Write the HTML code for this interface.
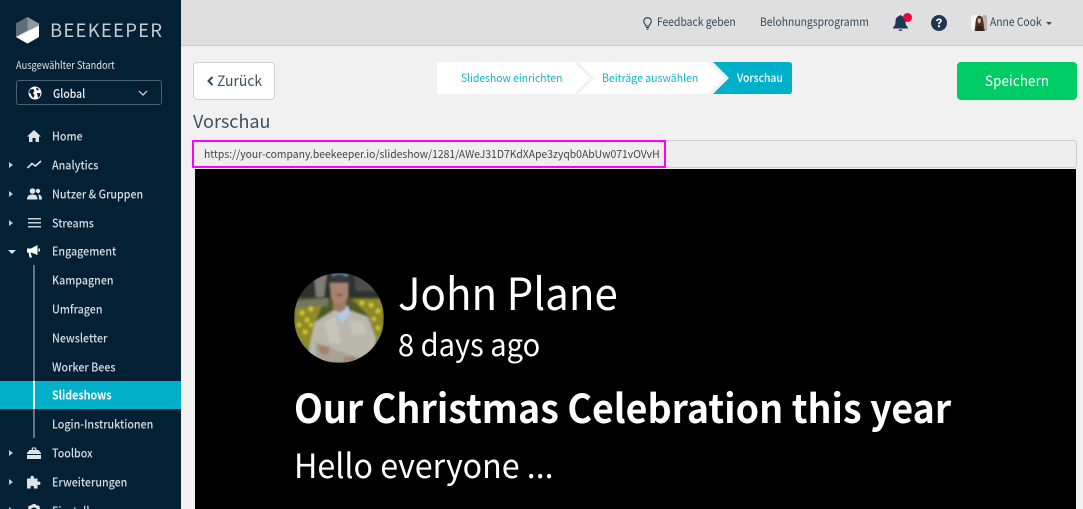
<!DOCTYPE html>
<html><head><meta charset="utf-8"><style>
html,body{margin:0;padding:0;width:1083px;height:509px;overflow:hidden;background:#f1f1f1}
body{position:relative;font-family:"Noto Sans CJK JP","Liberation Sans",sans-serif;}
.t{position:absolute;white-space:nowrap;line-height:20px;height:20px;transform-origin:0 50%}
.b{position:absolute}
.n{font-size:12px;color:#d8dde1;left:51.500px;font-weight:500;transform:translateY(.5px) scaleX(.89)}
svg{position:absolute;overflow:visible}
.a{position:absolute;left:9px;width:0;height:0;border-left:4px solid #c3cbd2;border-top:3.500px solid transparent;border-bottom:3.500px solid transparent}
</style></head><body>
<div class="b" style="left:0;top:0;width:181px;height:509px;background:#042035"></div>
<div class="b" style="left:181px;top:0;width:902px;height:45px;background:#dfdfdf;border-bottom:1px solid #c9c9c9"></div>

<svg style="left:16px;top:17px" width="24" height="27" viewBox="0 0 24 27"><polygon points="11.500,0 23,6.500 23,20 11.500,26.500 0,20 0,6.500" fill="#8d979f"/><polygon points="0,6.500 11.500,0 11.500,13 0,20" fill="#5f6d78"/><polygon points="0,20 23,8.500 23,20 11.500,26.500" fill="#fff"/></svg>
<div class="t" style="left:50px;top:20px;font-size:18.500px;letter-spacing:1.250px;color:#c6ccd1">BEEKEEPER</div>
<div class="t" style="left:16px;top:56px;font-size:10.500px;color:#dfe3e6;transform:scaleX(.884)">Ausgewählter Standort</div>
<div class="b" style="left:16px;top:80px;width:144px;height:23px;border:1px solid #4c6173;border-radius:3px"></div>
<svg style="left:28px;top:86px" width="14" height="14" viewBox="0 0 14 14"><circle cx="7" cy="7" r="6.500" fill="#fff"/><path d="M2 3.500L5.500 3 6.500 5 5 7 6.500 9 5.500 12 3.500 10 3 8 1 6.500ZM8 1.500L11 3 10 4.500 8.500 4ZM9 7H12.500L12 10 10 12 9.500 9.500Z" fill="#042035"/></svg>
<div class="t" style="left:53px;top:84px;font-size:12px;font-weight:500;color:#f0f2f4;transform:scaleX(.865)">Global</div>
<svg style="left:138px;top:90px" width="10" height="6" viewBox="0 0 10 6"><path d="M1 1L5 5 9 1" fill="none" stroke="#dfe3e6" stroke-width="1.200"/></svg>

<svg style="left:27px;top:130px" width="14" height="12" viewBox="0 0 14 12"><path d="M7 0L14 6.500H12V12H8.500V8H5.500V12H2V6.500H0Z" fill="#dfe3e6"/></svg>
<svg style="left:27px;top:160px" width="15" height="9" viewBox="0 0 15 9"><path d="M.5 8L5 3.500 8.500 6 14 1" fill="none" stroke="#dfe3e6" stroke-width="1.600"/></svg>
<svg style="left:27px;top:188px" width="15" height="12" viewBox="0 0 15 12"><circle cx="5.500" cy="3" r="2.800" fill="#dfe3e6"/><path d="M0 11.500C0 7.500 2.500 6.500 5.500 6.500S10.500 7.500 10.500 11.500Z" fill="#dfe3e6"/><circle cx="11" cy="3" r="2.200" fill="#dfe3e6"/><path d="M11 6.500C13.500 6.500 15 8 15 11.500H12C12 9.500 12 8 11 6.500Z" fill="#dfe3e6"/></svg>
<svg style="left:28px;top:218px" width="13" height="10" viewBox="0 0 13 10"><path d="M0 0H13V1.500H0ZM0 4H13V5.500H0ZM0 8H13V9.500H0Z" fill="#c9cfd4"/></svg>
<svg style="left:27px;top:245px" width="14" height="13" viewBox="0 0 14 13"><path d="M0 3.500H4L10.500 0V10L4 7.500H3.500L5 12.500H2.500L1.500 7.500H0Z" fill="#fff"/><path d="M11.500 3C13.500 3.500 13.500 6.500 11.500 7Z" fill="#fff"/></svg>
<svg style="left:27px;top:447px" width="14" height="12" viewBox="0 0 14 12"><path d="M0 6L2.500 3H4.500L5 .5H9L9.500 3H11.500L14 6V7H0ZM5.800 3H8.200L8 1.500H6ZM0 8H14V12H0Z" fill="#dfe3e6"/></svg>
<svg style="left:27px;top:475px" width="14" height="14" viewBox="0 0 14 14"><path d="M0 3.500H3.500C4 3 3.500 2.500 3.500 1.800 3.500.5 7 .5 7 1.800 7 2.500 6.500 3 7 3.500H10.500V6.500C11 7 11.500 6.500 12.300 6.500 13.800 6.500 13.800 10 12.300 10 11.500 10 11 9.500 10.500 10V13.500H7C6.500 13 7 12.500 7 11.800 7 10.500 3.500 10.500 3.500 11.800 3.500 12.500 4 13 3.500 13.500H0Z" fill="#dfe3e6"/></svg>
<svg style="left:27px;top:504px" width="14" height="14" viewBox="0 0 14 14"><circle cx="7" cy="7" r="5" fill="none" stroke="#dfe3e6" stroke-width="3"/><path d="M5.500 0H8.500V2H5.500ZM1 2.500L3 1.500 4 3 2.500 4.500ZM13 2.500L11 1.500 10 3 11.500 4.500Z" fill="#dfe3e6"/></svg>

<div class="a" style="top:161.500px"></div>
<div class="a" style="top:190.500px"></div>
<div class="a" style="top:219.500px"></div>
<div class="b" style="left:7.500px;top:250px;width:0;height:0;border-top:4px solid #dfe3e6;border-left:4px solid transparent;border-right:4px solid transparent"></div>
<div class="a" style="top:449.500px"></div>
<div class="a" style="top:478.500px"></div>
<div class="a" style="top:507px"></div>

<div class="b" style="left:33px;top:265px;width:2px;height:173px;background:#66747f"></div>
<div class="b" style="left:0;top:381px;width:181px;height:28px;background:#00afca"></div>
<div class="b" style="left:33px;top:381px;width:2px;height:28px;background:#fff"></div>

<div class="t n" style="top:126px">Home</div>
<div class="t n" style="top:155px">Analytics</div>
<div class="t n" style="top:184px">Nutzer &amp; Gruppen</div>
<div class="t n" style="top:213px">Streams</div>
<div class="t n" style="top:241px">Engagement</div>
<div class="t n" style="top:270px">Kampagnen</div>
<div class="t n" style="top:299px">Umfragen</div>
<div class="t n" style="top:328px">Newsletter</div>
<div class="t n" style="top:357px">Worker Bees</div>
<div class="t n" style="top:385px;color:#fff;font-weight:700">Slideshows</div>
<div class="t n" style="top:414px">Login-Instruktionen</div>
<div class="t n" style="top:443px">Toolbox</div>
<div class="t n" style="top:472px">Erweiterungen</div>
<div class="t n" style="top:501px">Einstellungen</div>

<svg style="left:643px;top:17px" width="9" height="13" viewBox="0 0 9 13"><path d="M4.500 .7C2.200 .7.700 2.300.700 4.300.700 6.300 2.500 7 2.800 9H6.200C6.500 7 8.300 6.300 8.300 4.300 8.300 2.300 6.800 .7 4.500 .7ZM3 10.500H6M3.500 12.200H5.500" fill="none" stroke="#1f3a52" stroke-width="1.100"/></svg>
<div class="t" style="left:657px;top:12px;font-size:11.500px;color:#33495d;transform:scaleX(.9)">Feedback geben</div>
<div class="t" style="left:760px;top:12px;font-size:11.500px;color:#33495d;transform:scaleX(.9)">Belohnungsprogramm</div>
<svg style="left:893px;top:15px" width="15" height="16" viewBox="0 0 15 16"><path d="M7.500 0C8.300 0 8.500.5 8.500 1 11 1.500 12.500 3.500 12.500 6.500 12.500 10 13.500 11 15 12.500V13.500H0V12.500C1.500 11 2.500 10 2.500 6.500 2.500 3.500 4 1.500 6.500 1 6.500.5 6.700 0 7.500 0ZM5.500 14.500H9.500C9.500 16.500 5.500 16.500 5.500 14.500Z" fill="#1d3852"/></svg>
<div class="b" style="left:903px;top:13px;width:9px;height:9px;border-radius:50%;background:#e5053a"></div>
<svg style="left:931px;top:15px" width="16" height="16" viewBox="0 0 16 16"><circle cx="8" cy="8" r="8" fill="#1d3852"/><path d="M5.200 6C5.300 4.300 6.500 3.500 8 3.500 9.700 3.500 10.900 4.500 10.900 5.800 10.900 7.600 8.800 7.600 8.800 9.300H7.100C7.100 7 9 7 9 5.900 9 5.300 8.600 5 8 5 7.300 5 7 5.400 6.800 6.200Z M7 10.300H8.900V12.200H7Z" fill="#fff"/></svg>
<svg style="left:971px;top:15px" width="16" height="16" viewBox="0 0 16 16"><rect width="16" height="16" rx="3" fill="#f7f4f2"/><rect x="11" width="5" height="16" rx="2" fill="#b9b2ac"/><path d="M3.500 16C5 11 3.500 1 8.500 .5 13.500 1 12 11 14 16Z" fill="#4a2f22"/><path d="M6.500 5C6.500 2.800 10 2.800 10 5 10 7 9 8.500 8.200 8.500 7.500 8.500 6.500 7 6.500 5Z" fill="#dcae94"/><path d="M5 16L6.500 11H10.500L12 16Z" fill="#2c2320"/></svg>
<div class="t" style="left:990px;top:12px;font-size:11.500px;color:#33495d;transform:scaleX(.895)">Anne Cook</div>
<div class="b" style="left:1046px;top:22px;width:0;height:0;border-top:3px solid #33495d;border-left:3.500px solid transparent;border-right:3.500px solid transparent"></div>

<div class="b" style="left:193px;top:62px;width:80px;height:36px;background:#fff;border:1px solid #cfcfcf;border-radius:4px"></div>
<svg style="left:207px;top:76px" width="7" height="10" viewBox="0 0 7 10"><path d="M5.500 1L1.500 5 5.500 9" fill="none" stroke="#33495d" stroke-width="2"/></svg>
<div class="t" style="left:217px;top:71px;font-size:14.500px;color:#3d5161;transform:scaleX(.96)">Zurück</div>

<svg style="left:437px;top:62px" width="355" height="32" viewBox="0 0 355 32"><path d="M3 0H137L153 16 137 32H3Q0 32 0 29V3Q0 0 3 0Z" fill="#fff"/><path d="M141 0H271L287 16 271 32H141L157 16Z" fill="#fff"/><path d="M276 0H352Q355 0 355 3V29Q355 32 352 32H276L292 16Z" fill="#00afca"/></svg>
<div class="t" style="left:461px;top:68px;font-size:11.200px;color:#0fb3cb;transform:scaleX(.927)">Slideshow einrichten</div>
<div class="t" style="left:602px;top:68px;font-size:11.200px;color:#0fb3cb;transform:scaleX(.94)">Beiträge auswählen</div>
<div class="t" style="left:737px;top:68px;font-size:11.200px;font-weight:500;color:#fff;transform:scaleX(.93)">Vorschau</div>

<div class="b" style="left:957px;top:62px;width:120px;height:38px;background:#00cc66;border-radius:4px"></div>
<div class="t" style="left:985px;top:71px;font-size:14.500px;color:#fff;letter-spacing:.2px;transform:scaleX(.915)">Speichern</div>

<div class="t" style="left:193px;top:111px;font-size:18px;color:#3d5161">Vorschau</div>

<div class="b" style="left:193px;top:140px;width:882px;height:26px;background:#eee;border:1px solid #cfcfcf;border-radius:3px"></div>
<div class="b" style="left:192px;top:140px;width:470px;height:24px;border:2px solid #f0f"></div>
<div class="t" style="left:203.500px;top:144px;font-size:10.800px;color:#444;transform:scaleX(.962)">https://your-company.beekeeper.io/slideshow/1281/AWeJ31D7KdXApe3zyqb0AbUw071vOVvH</div>

<div class="b" style="left:195px;top:169px;width:881px;height:340px;background:#000"></div>

<svg style="left:294px;top:273px" width="90" height="90" viewBox="0 0 90 90"><defs><clipPath id="c"><circle cx="45" cy="45" r="45"/></clipPath><filter id="f"><feGaussianBlur stdDeviation="1"/></filter></defs><g clip-path="url(#c)"><g filter="url(#f)"><rect width="90" height="90" fill="#4e5a28"/><rect width="90" height="25" fill="#2f322e"/><path d="M20 0H33L30 24H22Z" fill="#7d7d72"/><path d="M60 0H76L82 18H62Z" fill="#4b4e48"/><path d="M38 0H54V3H38Z" fill="#6e8fb0"/><path d="M0 28L34 25V33L0 36Z" fill="#75765f"/><path d="M0 36L28 32 22 48 14 76 0 70Z" fill="#8d8a2a"/><path d="M58 26L90 26V66L82 68 74 42Z" fill="#8d8a2a"/>
<g fill="#d8c42e"><circle cx="8" cy="40" r="2.400"/><circle cx="17" cy="36" r="2.400"/><circle cx="13" cy="47" r="2.400"/><circle cx="5" cy="52" r="2.200"/><circle cx="11" cy="59" r="2.400"/><circle cx="17" cy="52" r="2"/><circle cx="68" cy="30" r="2.400"/><circle cx="77" cy="32" r="2.400"/><circle cx="84" cy="38" r="2.400"/><circle cx="80" cy="46" r="2"/><circle cx="84" cy="55" r="2.200"/></g>
<path d="M13 90L15 74 21 49 40 37 46 44 52 36 74 44 82 66 80 84 70 90Z" fill="#bab8ad"/><path d="M30 50L42 42 47 70H36ZM56 48L70 50 72 60 58 62Z" fill="#c6c4ba"/><path d="M21 68C34 74 48 80 66 84L62 90H22Z" fill="#a8a396"/><path d="M24 72L36 74 34 82 26 80Z" fill="#a67f68"/><path d="M50 84L62 84 60 88 50 88Z" fill="#a67f68"/><path d="M39 34L54 33 56 40 48 50 43 42Z" fill="#b4cbe8"/><path d="M39 24H52V36L45 40 39 36Z" fill="#9f7a66"/><path d="M34 8C38 -1 52 -1 56 8V15L54 12H36L34 15Z" fill="#36373a"/><path d="M36 10H54V24C51 32 39 32 37 24Z" fill="#a98370"/><path d="M42 21H49L47 23H43Z" fill="#8f3d34"/></g></g></svg>
<div class="t" style="left:398px;top:266px;height:50px;line-height:50px;font-size:44px;color:#fff;transform:scaleX(.956)">John Plane</div>
<div class="t" style="left:398px;top:323px;height:40px;line-height:40px;font-size:30.500px;color:#fff;transform:scaleX(.953)">8 days ago</div>
<div class="t" style="left:294px;top:382px;height:50px;line-height:50px;font-size:39.500px;color:#fff;font-weight:700;transform:scaleX(.951)">Our Christmas Celebration this year</div>
<div class="t" style="left:294px;top:444px;height:40px;line-height:40px;font-size:33.500px;color:#fff;transform:scaleX(.96)">Hello everyone ...</div>
</body></html>
